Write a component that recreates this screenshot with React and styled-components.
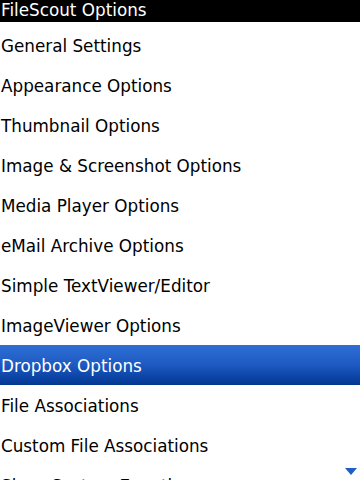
import React from "react";
import styled, { createGlobalStyle } from "styled-components";

const Global = createGlobalStyle`
  html, body { margin: 0; padding: 0; background: #fff; }
  body { width: 360px; height: 480px; overflow: hidden; font-family: "DejaVu Sans", "Liberation Sans", sans-serif; }
`;

const Screen = styled.div`
  position: relative;
  width: 360px;
  height: 480px;
  overflow: hidden;
  background: #fff;
  display: flex;
  flex-direction: column;
`;

const Header = styled.div`
  height: 22px;
  background: #000;
  color: #fff;
  font-size: 16.8px;
  line-height: 21px;
  padding-left: 1px;
  margin-bottom: 3px;
  flex-shrink: 0;
`;

const List = styled.div`
  display: flex;
  flex-direction: column;
`;

const Row = styled.div`
  height: 40px;
  box-sizing: border-box;
  padding-top: 1px;
  flex-shrink: 0;
  display: flex;
  align-items: center;
  padding-left: 1px;
  font-size: 16.8px;
  color: ${(p) => (p.$selected ? "#fff" : "#000")};
  background: ${(p) =>
    p.$selected
      ? "linear-gradient(to bottom, #2f6fd4 0%, #1f5cc4 45%, #0f48ab 75%, #033790 100%)"
      : "#fff"};
`;

const MoreArrow = styled.svg`
  position: absolute;
  right: 3px;
  bottom: 5px;
`;

const items = [
  "General Settings",
  "Appearance Options",
  "Thumbnail Options",
  "Image & Screenshot Options",
  "Media Player Options",
  "eMail Archive Options",
  "Simple TextViewer/Editor",
  "ImageViewer Options",
  "Dropbox Options",
  "File Associations",
  "Custom File Associations",
  "Show System Eventlog",
];

export default function App() {
  return (
    <Screen>
      <Global />
      <Header>FileScout Options</Header>
      <List>
        {items.map((t) => (
          <Row key={t} $selected={t === "Dropbox Options"}>
            {t}
          </Row>
        ))}
      </List>
      <MoreArrow width="12" height="7" viewBox="0 0 12 7">
        <path d="M0 0 H12 L6 7 Z" fill="#1f5ec4" />
      </MoreArrow>
    </Screen>
  );
}
